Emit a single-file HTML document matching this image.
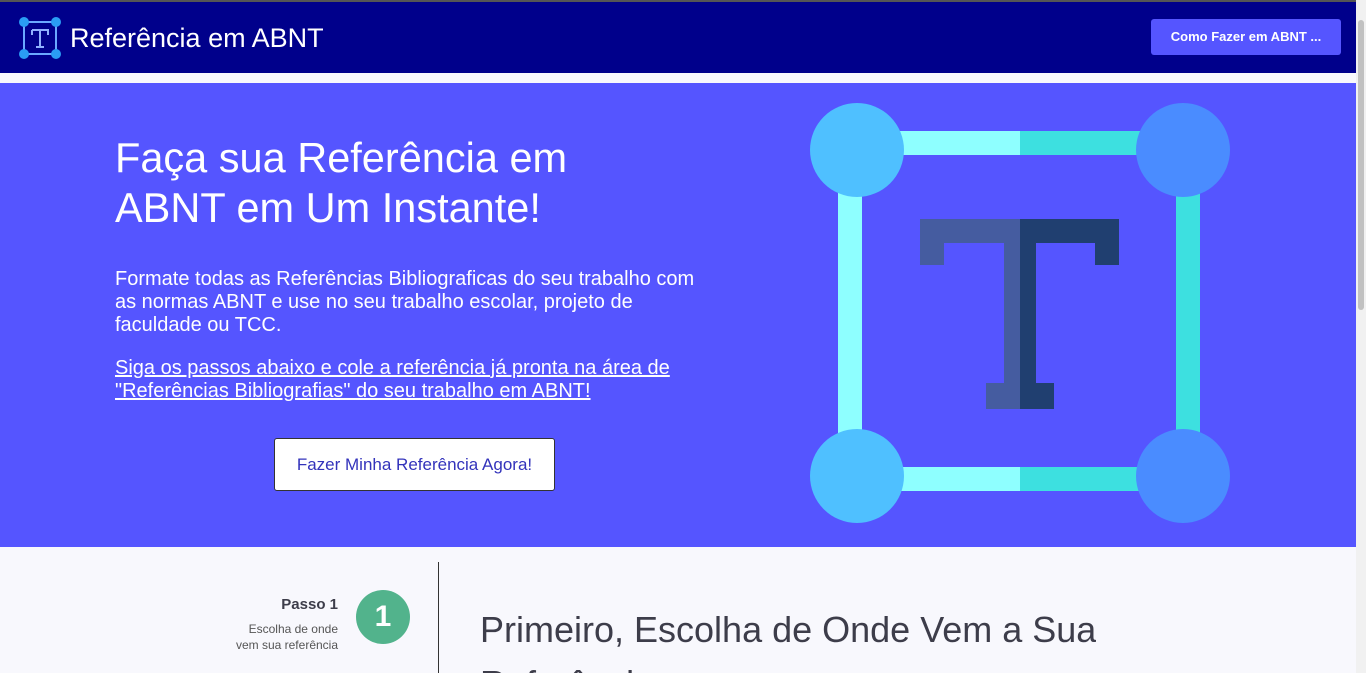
<!DOCTYPE html>
<html style="overflow:hidden;height:673px"><head><meta charset="utf-8"><style>
*{margin:0;padding:0;box-sizing:border-box}
html,body{overflow:hidden}
body{width:1366px;height:673px;background:#f8f8fd;font-family:"Liberation Sans",sans-serif;position:relative}
.wrap{position:absolute;left:0;top:0;width:1366px;height:673px;overflow:hidden}
.top{position:absolute;left:0;top:0;width:1356px;height:2px;background:#555}
.nav{position:absolute;left:0;top:2px;width:1356px;height:71px;background:#00008b}
.nav .t{position:absolute;left:70px;top:21px;color:#fff;font-size:27px;font-family:"Liberation Sans",sans-serif}
.btn{position:absolute;left:1151px;top:17px;width:190px;height:36px;background:#5555ff;border-radius:3px;color:#fff;font-size:13px;font-weight:bold;text-align:center;line-height:36px}
.hero{position:absolute;left:0;top:83px;width:1356px;height:464px;background:#5555ff;color:#fff}
h1{position:absolute;left:115px;top:50px;font-size:41.5px;font-weight:normal;line-height:50px;white-space:nowrap}
.p{position:absolute;left:115px;font-size:20px;line-height:23px;width:590px}
.cta{position:absolute;left:274px;top:355px;width:281px;height:53px;background:#fff;border:1px solid #333;border-radius:3px;color:#3333bb;font-size:17px;text-align:center;line-height:51px}
.sb{position:absolute;right:0;top:0;width:10px;height:673px;background:#f1f1f1}
.sb div{position:absolute;left:2px;top:20px;width:6px;height:290px;background:#c1c1c1;border-radius:3px}
.s{font-family:"Liberation Sans",sans-serif;color:#3d3d4a;position:absolute}
</style></head><body><div class="wrap">
<div class="top"></div>
<div class="nav">
<svg style="position:absolute;left:18px;top:14px" width="44" height="44" viewBox="0 0 44 44"><rect x="6" y="6" width="32" height="32" fill="none" stroke="#6aa8ff" stroke-width="2"/><circle cx="6" cy="6" r="5" fill="#2a9df4"/><circle cx="38" cy="6" r="5" fill="#2a9df4"/><circle cx="6" cy="38" r="5" fill="#2a9df4"/><circle cx="38" cy="38" r="5" fill="#2a9df4"/><path d="M14 14h16v5M14 14v5M22 14v17M18 31h8" fill="none" stroke="#8fb0ff" stroke-width="2"/></svg>
<div class="t">Referência em ABNT</div>
<div class="btn">Como Fazer em ABNT ...</div>
</div>
<div class="hero">
<h1>Faça sua Referência em<br>ABNT em Um Instante!</h1>
<div class="p" style="top:185px">Formate todas as Referências Bibliograficas do seu trabalho com as normas ABNT e use no seu trabalho escolar, projeto de faculdade ou TCC.</div>
<div class="p" style="top:274px;text-decoration:underline">Siga os passos abaixo e cole a referência já pronta na área de "Referências Bibliografias" do seu trabalho em ABNT!</div>
<div class="cta">Fazer Minha Referência Agora!</div>
<svg style="position:absolute;left:808px;top:18px" width="424" height="424" viewBox="0 0 424 424">
<rect x="30" y="30" width="182" height="24" fill="#8effff"/><rect x="212" y="30" width="182" height="24" fill="#3de0e0"/>
<rect x="30" y="366" width="182" height="24" fill="#8effff"/><rect x="212" y="366" width="182" height="24" fill="#3de0e0"/>
<rect x="30" y="30" width="24" height="360" fill="#8effff"/><rect x="368" y="30" width="24" height="360" fill="#3de0e0"/>
<circle cx="49" cy="49" r="47" fill="#4fc0ff"/><circle cx="375" cy="49" r="47" fill="#4a8cff"/>
<circle cx="49" cy="375" r="47" fill="#4fc0ff"/><circle cx="375" cy="375" r="47" fill="#4a8cff"/>
<path d="M112 118h100v24h-76v22h-24z" fill="#455ca0"/><path d="M212 118h99v46h-24v-22h-75z" fill="#203f70"/>
<rect x="196" y="142" width="16" height="140" fill="#455ca0"/><rect x="212" y="142" width="16" height="140" fill="#203f70"/>
<rect x="178" y="282" width="34" height="26" fill="#455ca0"/><rect x="212" y="282" width="34" height="26" fill="#203f70"/>
</svg>
</div>
<div style="position:absolute;left:438px;top:562px;width:1px;height:111px;background:#333"></div>
<div class="s" style="left:200px;top:596px;width:138px;text-align:right;font-weight:bold;font-size:15px">Passo 1</div>
<div class="s" style="left:200px;top:621px;width:138px;text-align:right;font-size:12px;line-height:16px;color:#555">Escolha de onde<br>vem sua referência</div>
<div style="position:absolute;left:356px;top:590px;width:54px;height:54px;border-radius:50%;background:#52b38c;color:#fff;font-size:30px;font-weight:bold;text-align:center;line-height:54px">1</div>
<div class="s" style="left:480px;top:603px;font-size:36px;line-height:54px;white-space:nowrap;height:70px;overflow:hidden">Primeiro, Escolha de Onde Vem a Sua<br>Referência</div>
<div class="sb"><div></div></div>
</div></body></html>
